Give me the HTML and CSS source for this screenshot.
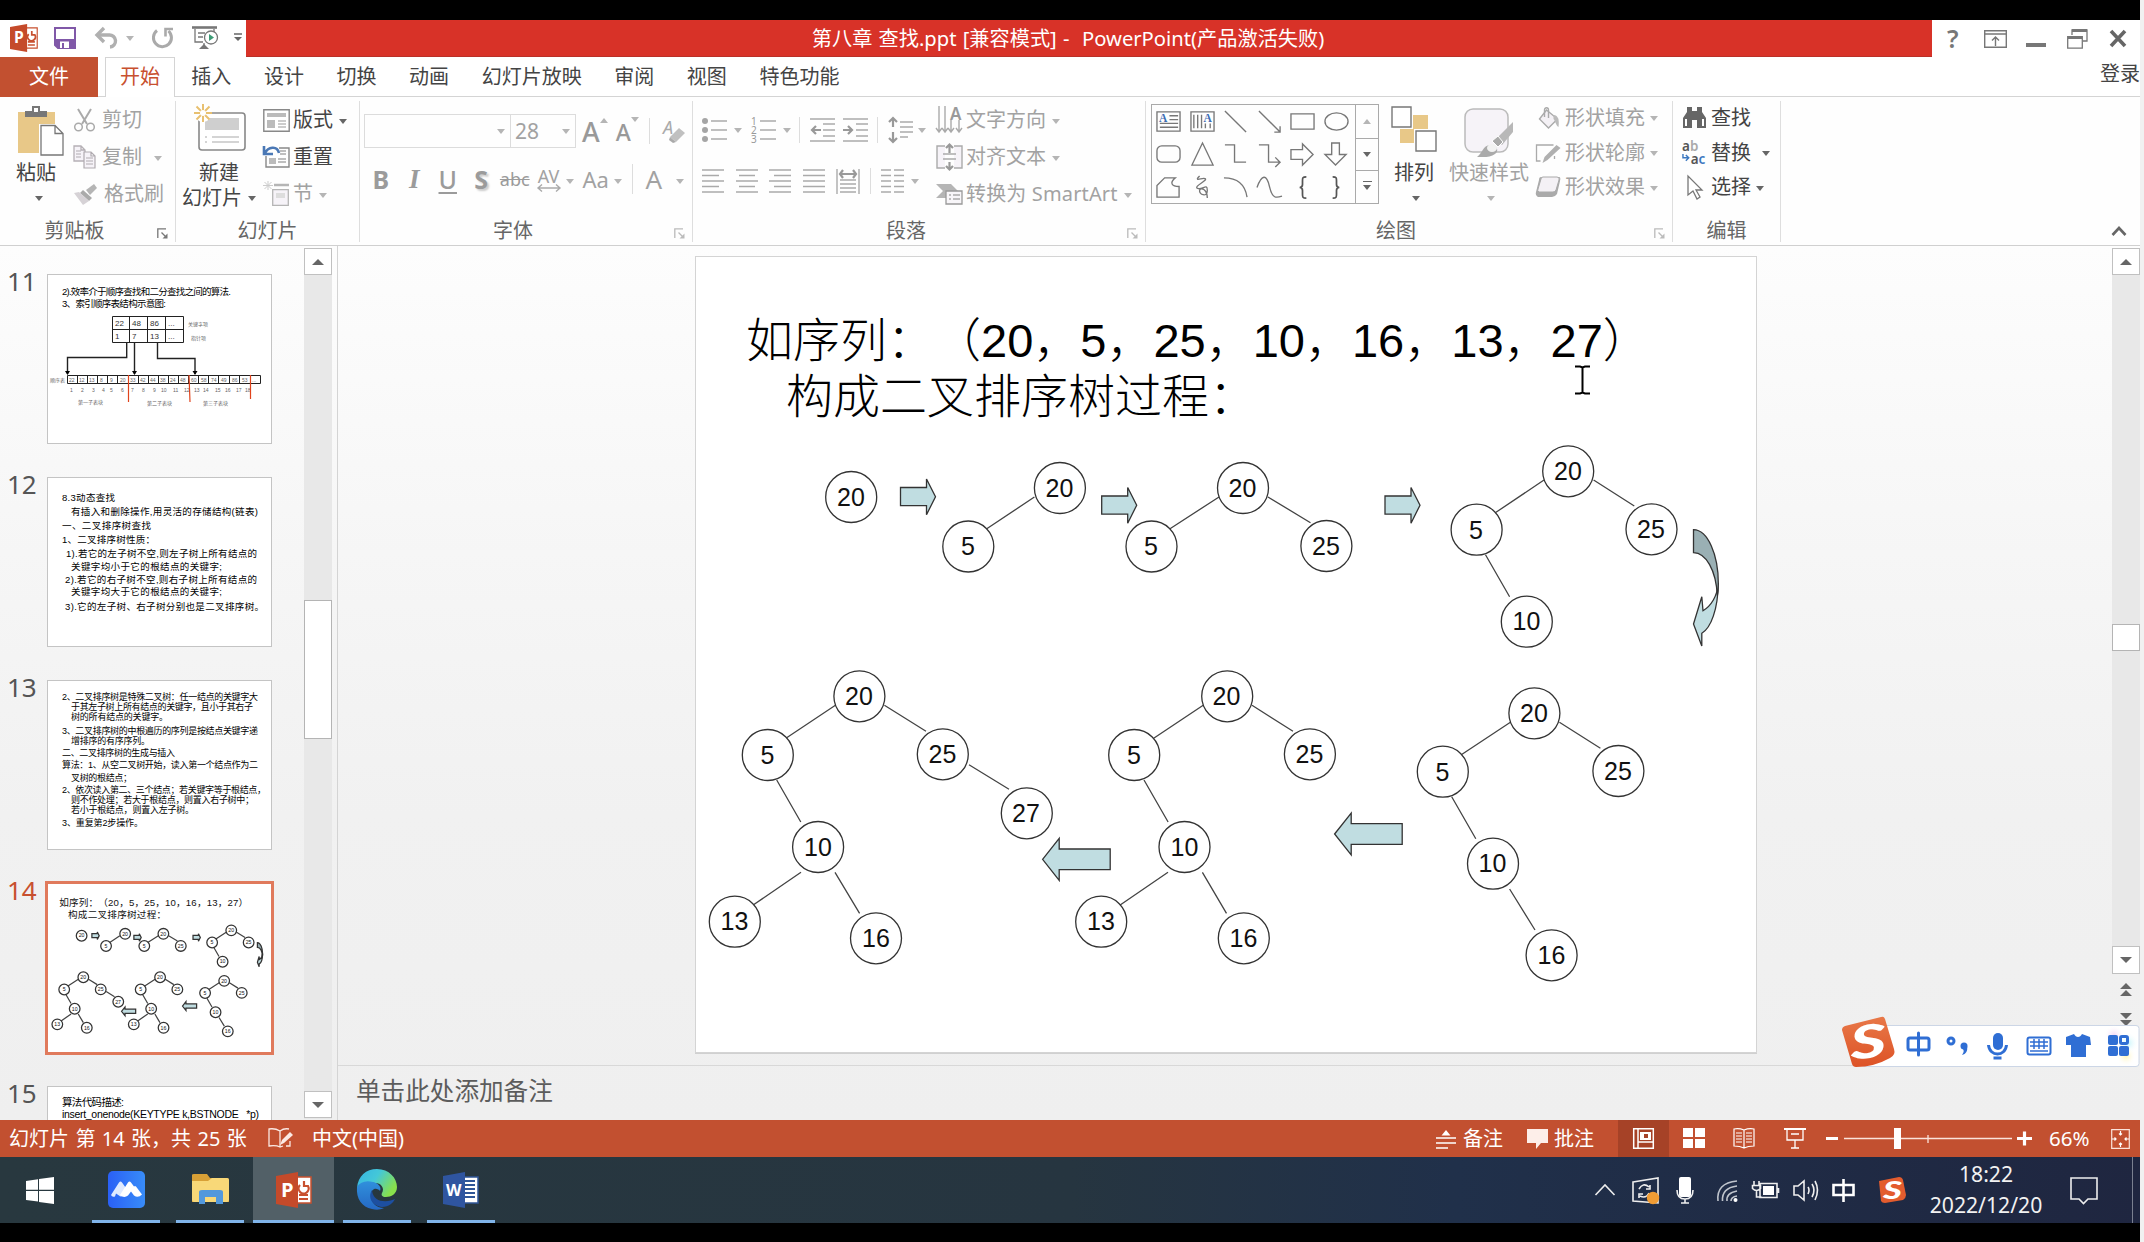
FILE: index.html
```html
<!DOCTYPE html>
<html lang="zh-CN">
<head>
<meta charset="utf-8">
<title>第八章 查找.ppt - PowerPoint</title>
<link rel="stylesheet" href="styles.css">
</head>
<body>
<svg class="defs" width="0" height="0">
  <symbol id="launcher" viewBox="0 0 12 12"><path d="M.8 10V.8H9" fill="none" stroke="currentColor" stroke-width="1.3"/><path d="M4.5 4.5l4 4" stroke="currentColor" stroke-width="1.3"/><path d="M10.500 5.500v5h-5z" fill="currentColor"/></symbol>
  <symbol id="ppt" viewBox="0 0 36 36"><path d="M20 5h15v26H20z" fill="#fff" stroke="#c8502f" stroke-width="1.500"/><path d="M24 13a5 5 0 1 0 8 1h-4v-5M23 23h9M23 27h9" fill="none" stroke="#c8502f" stroke-width="2.200"/><path d="M0 4 22 0v36L0 32z" fill="#c54a2a"/><text x="5" y="24.500" class="logo-letter">P</text></symbol>
  <symbol id="word" viewBox="0 0 36 36"><path d="M20 5h15v26H20z" fill="#fff" stroke="#2f5597" stroke-width="1.500"/><path d="M22 9h10M22 13h10M22 17h10M22 21h10M22 25h10" stroke="#2f5597" stroke-width="2"/><path d="M0 4 22 0v36L0 32z" fill="#2f55a0"/><text x="3" y="24" class="logo-letter word-letter">W</text></symbol>
</svg>
<div class="letterbox top"></div>

<header class="titlebar">
  <div class="quick">
    <svg width="28" height="28"><use href="#ppt"/></svg>
    <svg class="save" width="22" height="22" viewBox="0 0 22 22"><path d="M1 1h20v20H4l-3-3z" fill="#fff" stroke="#8058a8" stroke-width="2"/><path d="M1 12h20v9H4l-3-3z" fill="#8058a8"/><path d="M6 14.500h9V21H6z" fill="#fff"/><path d="M8 16h2v5H8z" fill="#8058a8"/></svg>
    <svg class="undo" width="24" height="22" viewBox="0 0 24 22"><path d="M2 8h12a6 6 0 0 1 1 12" fill="none" stroke="#b0b0b0" stroke-width="3.400"/><path d="M9 1 2 8l7 7" fill="none" stroke="#b0b0b0" stroke-width="3.400"/></svg>
    <i class="caret faint undo-caret"></i>
    <svg class="redo" width="24" height="22" viewBox="0 0 24 22"><path d="M6 3.500A9 9 0 1 0 17.500 4" fill="none" stroke="#aaa" stroke-width="3"/><path d="M14.500 9.500V2h7.500" fill="none" stroke="#aaa" stroke-width="2.600"/></svg>
    <svg class="show" width="26" height="24" viewBox="0 0 26 24"><path d="M0 1.500h25" stroke="#777" stroke-width="2.600"/><path d="M3 3v13h8M22 3v3M6 7h7M6 11h5M12 17v3" stroke="#777" stroke-width="1.300" fill="none"/><path d="M7 23l5-5 5 5z" fill="#777"/><circle cx="19" cy="11.500" r="6.500" fill="#fff" stroke="#777" stroke-width="1.300"/><path d="M17 8l5 3.500-5 3.500z" fill="#3d9b76"/></svg>
    <svg class="custom" width="8" height="10" viewBox="0 0 8 10"><path d="M0 1h8" stroke="#666" stroke-width="1.500"/><path d="M0 4h8L4 8z" fill="#666"/></svg>
  </div>
  <div class="caption">第八章 查找.ppt [兼容模式] -&nbsp; PowerPoint(产品激活失败)</div>
  <div class="window-tools">
    <span class="help">?</span>
    <svg class="opts" width="23" height="18" viewBox="0 0 23 18"><path d="M.7.700h21.600v16.600H.700zM.7 4h21.600M11.500 16V7M8 10.500 11.500 7l3.500 3.500" fill="none" stroke="#777" stroke-width="1.400"/></svg>
    <i class="minimise"></i>
    <svg class="restore" width="21" height="20" viewBox="0 0 21 20"><path d="M5 6V1h15v11h-4" fill="none" stroke="#777" stroke-width="1.300"/><path d="M5 1.500h15M1 8.500h14" stroke="#777" stroke-width="3"/><path d="M.7 7.700h14.600v11.500H.700z" fill="none" stroke="#777" stroke-width="1.300"/></svg>
    <svg class="close" width="18" height="17" viewBox="0 0 18 17"><path d="M2 1l14 15M16 1 2 16" stroke="#666" stroke-width="3.600"/></svg>
  </div>
</header>

<nav class="tabs">
  <span class="file">文件</span><span class="tab active">开始</span><span class="tab">插入</span><span class="tab">设计</span><span class="tab">切换</span><span class="tab">动画</span><span class="tab">幻灯片放映</span><span class="tab">审阅</span><span class="tab">视图</span><span class="tab">特色功能</span><span class="login">登录</span>
</nav>

<section class="ribbon">
  <div class="group g-clip">
    <div class="body">
      <div class="big paste">
        <svg width="47" height="50" viewBox="0 0 47 50"><path d="M1 6h37v41H1z" fill="#e8c888"/><path d="M8 11V5h7V0h8v5h7v6z" fill="#777"/><path d="M17 2h4v4h-4z" fill="#fff"/><path d="M22 18h16l9 9v23H22z" fill="#fff"/><path d="M24 19.500h14l8 8V49H24zM38 19.500v8h8" fill="#fff" stroke="#777" stroke-width="1.300"/></svg>
        <b>粘贴</b><i class="caret"></i>
      </div>
      <div class="rows off">
        <div><svg width="23" height="24" viewBox="0 0 23 24"><path d="M5 1l9 15M18 1 9 16" stroke="#aaa" stroke-width="2"/><circle cx="5.500" cy="19" r="3.800" fill="none" stroke="#aaa" stroke-width="1.500"/><circle cx="17.500" cy="19" r="3.800" fill="none" stroke="#aaa" stroke-width="1.500"/></svg><span>剪切</span></div>
        <div><svg width="23" height="24" viewBox="0 0 23 24"><path d="M1 1h7l4 4v11H1zM8 1v4h4" fill="#f6f3f8" stroke="#b5b0b5" stroke-width="1.300"/><path d="M11 7h7l4 4v12H11zM18 7v4h4M13 13h7M13 16h7M13 19h7M3 6h5M3 9h5M3 12h5" fill="#f6f3f8" stroke="#b0abb0" stroke-width="1.200"/></svg><span>复制</span><i class="caret"></i></div>
        <div><svg width="25" height="22" viewBox="0 0 25 22"><path d="M13 7l8-6 3 4-7 7z" fill="#b5b5b5"/><path d="M10 7l9 8-3 3-9-8z" fill="#aaa"/><path d="M6 9l10 9-6 4-9-12z" fill="#d6d2d6"/></svg><span>格式刷</span></div>
      </div>
    </div>
    <div class="foot"><span>剪贴板</span><svg width="12" height="12"><use href="#launcher"/></svg></div>
  </div>

  <div class="group g-slides">
    <div class="body">
      <div class="big newslide">
        <svg width="52" height="48" viewBox="0 0 52 48"><rect x="5" y="9" width="46" height="37" rx="3" fill="#fff" stroke="#888" stroke-width="1.600"/><path d="M11 14h34v12H11z" fill="#cfcfcf"/><path d="M18 33h27M18 38h27M11 33h2M11 38h2" stroke="#aaa" stroke-width="1.200"/><circle cx="9" cy="9" r="9" fill="#fff"/><path d="M9 0v18M0 9h18M2.500 2.500l13 13M15.500 2.500l-13 13" stroke="#e8c070" stroke-width="2"/><circle cx="9" cy="9" r="3" fill="#fff"/></svg>
        <b>新建</b><b class="second">幻灯片<i class="caret"></i></b>
      </div>
      <div class="rows">
        <div><svg width="27" height="23" viewBox="0 0 27 23"><path d="M.8.800h25.400v21.400H.800z" fill="#fff" stroke="#888" stroke-width="1.400"/><path d="M4 4h19v4H4zM4 11h8v8H4z" fill="#bbb"/><path d="M15 12h8M15 15h8M15 18h8" stroke="#999" stroke-width="1.200"/></svg><span>版式</span><i class="caret"></i></div>
        <div><svg width="27" height="24" viewBox="0 0 27 24"><path d="M16 3h10v19H3V11" fill="none" stroke="#888" stroke-width="1.400"/><path d="M17 6h6M17 9h6M15 14h8M15 17h8" stroke="#aaa" stroke-width="1.300"/><path d="M6 13h7v6H6z" fill="#bbb"/><path d="M1 1v8h9M2 8C5 2 14 0 16 8" fill="none" stroke="#4a78b5" stroke-width="2.600"/></svg><span>重置</span></div>
        <div class="off"><svg width="27" height="26" viewBox="0 0 27 26"><path d="M5 0v9M0 4.500h10M1.500 1l7 7M8.500 1l-7 7" stroke="#ccc"/><path d="M11 4h15" stroke="#b5b5b5" stroke-width="2.500"/><path d="M9.700 8.700h15.600v15.600H9.700z" fill="#f6f3f8" stroke="#b5b5b5" stroke-width="1.300"/><path d="M13 12h9v5h-9z" fill="#ddd"/></svg><span>节</span><i class="caret"></i></div>
      </div>
    </div>
    <div class="foot"><span>幻灯片</span></div>
  </div>

  <div class="group g-font off">
    <div class="body">
      <div class="line font-top">
        <div class="combo"><span></span><i class="caret faint"></i></div><div class="combo size"><span>28</span><i class="caret faint"></i></div>
        <span class="grow">A<i class="caret up"></i></span><span class="shrink">A<i class="caret"></i></span><i class="vsep"></i>
        <svg width="23" height="25" viewBox="0 0 23 25"><text x="0" y="15" class="erase-a">A</text><path d="M16 9l6 5-9 9-6-5z" fill="#c0c0c0"/><path d="M7 18l6 5-3 1-4-3z" fill="#aaa"/></svg>
      </div>
      <div class="line font-bottom">
        <b class="fb">B</b><b class="fb it">I</b><b class="fb un">U</b><b class="fb sh">S</b><span class="fb strike">abc</span><span class="av">AV<svg width="24" height="8" viewBox="0 0 24 8"><path d="M1 4h22M5 .500 1 4l4 3.500M19 .500l4 3.500-4 3.500" fill="none" stroke="#aaa" stroke-width="1.400"/></svg></span><i class="caret faint"></i><span class="aa">Aa</span><i class="caret faint"></i><i class="vsep"></i><span class="fcolor">A</span><i class="caret faint"></i>
      </div>
    </div>
    <div class="foot"><span>字体</span><svg width="12" height="12"><use href="#launcher"/></svg></div>
  </div>

  <div class="group g-para off">
    <div class="body">
      <div class="para-left">
        <div class="line">
          <svg class="ln" width="25" height="26" viewBox="0 0 25 26"><path d="M9 4h16M9 13h16M9 22h16"/><g class="dot"><circle cx="3" cy="4" r="3"/><circle cx="3" cy="13" r="3"/><circle cx="3" cy="22" r="3"/></g></svg><i class="caret faint c1"></i>
          <svg class="ln nums" width="25" height="26" viewBox="0 0 25 26"><path d="M9 4h16M9 13h16M9 22h16"/><g class="n"><text x="0" y="8">1</text><text x="0" y="17">2</text><text x="0" y="26">3</text></g></svg><i class="caret faint c2"></i><i class="vsep"></i>
          <svg class="ln o1" width="25" height="24" viewBox="0 0 25 24"><path d="M0 1h25M13 6h12M13 12h12M13 18h12M0 23h25"/><path class="arr" d="M11 12H2M6 8l-4 4 4 4"/></svg>
          <svg class="ln o2" width="25" height="24" viewBox="0 0 25 24"><path d="M0 1h25M13 6h12M13 12h12M13 18h12M0 23h25"/><path class="arr" d="M0 12h9M5 8l4 4-4 4"/></svg><i class="vsep s2"></i>
          <svg class="ln o3" width="25" height="26" viewBox="0 0 25 26"><path d="M12 5h13M12 10h13M12 15h13M12 20h8"/><path class="arr" d="M5 1v9M1 5l4-4 4 4M5 15v9M1 21l4 4 4-4"/></svg><i class="caret faint c3"></i>
        </div>
        <div class="line second">
          <svg class="ln" width="23" height="24" viewBox="0 0 23 24"><path d="M0 1h22M0 6.500h17M0 12h22M0 17.500h17M0 23h22"/></svg>
          <svg class="ln" width="23" height="24" viewBox="0 0 23 24"><path d="M0 1h22M3 6.500h16M0 12h22M3 17.500h16M0 23h22"/></svg>
          <svg class="ln" width="23" height="24" viewBox="0 0 23 24"><path d="M0 1h22M5 6.500h17M0 12h22M5 17.500h17M0 23h22"/></svg>
          <svg class="ln" width="23" height="24" viewBox="0 0 23 24"><path d="M0 1h22M0 6.500h22M0 12h22M0 17.500h22M0 23h22"/></svg>
          <svg class="ln" width="24" height="25" viewBox="0 0 24 25"><path d="M1 0v25M23 0v25M4 11h16M4 15h16M4 19h16M4 23h16"/><path class="arr" d="M4 5h16M7 1 4 5l3 4M17 1l3 4-3 4"/></svg><i class="vsep"></i>
          <svg class="ln" width="23" height="24" viewBox="0 0 23 24"><path d="M0 1h10M0 6.500h10M0 12h10M0 17.500h10M0 23h10M13 1h10M13 6.500h10M13 12h10M13 17.500h10M13 23h10"/></svg><i class="caret faint"></i>
        </div>
      </div>
      <div class="rows">
        <div><svg class="ln" width="27" height="28" viewBox="0 0 27 28"><path d="M3 0v26M9 0v26M15 14v12M23 14v12M0 22l3 4 3-4M6 22l3 4 3-4M12 22l3 4 3-4M20 22l3 4 3-4"/><text x="14" y="14" class="dir-a">A</text></svg><span>文字方向</span><i class="caret"></i></div>
        <div><svg class="ln" width="27" height="26" viewBox="0 0 27 26"><path d="M9 2H1v22h8M18 2h8v22h-8M7 10h13M7 15h13" fill="#f6f3f8"/><path class="arr" d="M13.500 9V1M10 4l3.500-3.500L17 4M13.500 18v7M10 22l3.500 3.500L17 22"/></svg><span>对齐文本</span><i class="caret"></i></div>
        <div><svg width="27" height="22" viewBox="0 0 27 22"><path d="M0 1h15l7 7-7 7H0l7-7z" fill="#b5b5b5"/><path d="M10 8h16v13H10z" fill="#f8f6f9" stroke="#999" stroke-width="1.300"/><path d="M13 12h2M17 12h7M13 16h2M17 16h7" stroke="#aaa" stroke-width="1.300"/></svg><span class="smart">转换为 SmartArt</span><i class="caret"></i></div>
      </div>
    </div>
    <div class="foot"><span>段落</span><svg width="12" height="12"><use href="#launcher"/></svg></div>
  </div>

  <div class="group g-draw">
    <div class="body">
      <div class="gallery">
        <div class="shapes">
          <svg viewBox="0 0 26 26"><path d="M1 3h24v20H1zM14 7h9M14 11h9M4 15h19M4 19h19"/><text x="3" y="13">A</text></svg>
          <svg viewBox="0 0 26 26"><path d="M1 3h24v20H1zM4 6v14M8 6v14M12 6v14M16 15v5M21 15v5"/><text x="14" y="13">A</text></svg>
          <svg viewBox="0 0 26 26"><path d="M2 2l22 22"/></svg>
          <svg viewBox="0 0 26 26"><path d="M2 2l22 22M24 18v6h-6"/></svg>
          <svg viewBox="0 0 26 26"><path d="M1 5h24v16H1z"/></svg>
          <svg viewBox="0 0 26 26"><ellipse cx="13" cy="13" rx="12" ry="9"/></svg>
          <svg viewBox="0 0 26 26"><rect x="1" y="4" width="24" height="17" rx="5"/></svg>
          <svg viewBox="0 0 26 26"><path d="M13 1l11 23H2z"/></svg>
          <svg viewBox="0 0 26 26"><path d="M2 3h10v18h12"/></svg>
          <svg viewBox="0 0 26 26"><path d="M2 3h10v18h12M19 16l5 5-5 5"/></svg>
          <svg viewBox="0 0 26 26"><path d="M1 8h12V2l11 11-11 11v-6H1z"/></svg>
          <svg viewBox="0 0 26 26"><path d="M8 1h8v12h7L12 24 1 13h7z"/></svg>
          <svg viewBox="0 0 26 26"><path d="M1 23V11l8-8h11c-6 5-4 9 4 9v11z"/></svg>
          <svg viewBox="0 0 26 26"><path d="M10 1C3 8 14 2 16 4S3 12 8 14s10-6 10 2-9 4-8 0 8-1 8 8"/></svg>
          <svg viewBox="0 0 26 26"><path d="M1 3c14 0 22 7 24 20"/></svg>
          <svg viewBox="0 0 26 26"><path d="M0 13C5-1 10-1 13 12s7 12 13 10"/></svg>
          <svg viewBox="0 0 26 26" class="brace"><path d="M17 2c-4 0-4 1-4 4v4c0 2-1 3-3 3 2 0 3 1 3 3v4c0 3 0 4 4 4"/></svg>
          <svg viewBox="0 0 26 26" class="brace"><path d="M9 2c4 0 4 1 4 4v4c0 2 1 3 3 3-2 0-3 1-3 3v4c0 3 0 4-4 4"/></svg>
        </div>
        <div class="gscroll"><span><i class="caret up faint"></i></span><span><i class="caret"></i></span><span class="more"><i class="caret"></i></span></div>
      </div>
      <div class="big arrange">
        <svg width="46" height="47" viewBox="0 0 46 47"><path d="M22 9h15v15H22zM9 23h14v14H9z" fill="#e8c888"/><path d="M1 1h19v20H1z" fill="#fff" stroke="#777" stroke-width="1.400"/><path d="M23 23h23v23H23z" fill="#fff"/><path d="M25 25h20v20H25z" fill="#fff" stroke="#777" stroke-width="1.400"/></svg>
        <b>排列</b><i class="caret"></i>
      </div>
      <div class="big quickstyle off">
        <svg width="50" height="50" viewBox="0 0 50 50"><rect x="1" y="1" width="43" height="43" rx="8" fill="#f6f3f8" stroke="#bbb" stroke-width="1.500"/><path d="M49 14v10l-11 13-6-6z" fill="#b8b8b8"/><path d="M34 28l5 6-5 5-6-6z" fill="#aaa" stroke="#fff"/><path d="M13 49c5-3 6-12 13-12 6-1 10 5 5 9s-12 3-18 3z" fill="#aaa"/><ellipse cx="28" cy="40" rx="5" ry="4" fill="#f2f2f2"/></svg>
        <b>快速样式</b><i class="caret"></i>
      </div>
      <div class="rows tight off">
        <div><svg width="26" height="22" viewBox="0 0 26 22"><path d="M11 3l11 9-9 9-9-9z" fill="#f4f1f5" stroke="#aaa" stroke-width="1.400"/><path d="M9 10V3c0-3 4-3 4 0v8" fill="none" stroke="#aaa" stroke-width="1.400"/><path d="M18 8c5 0 6 6 5 12-3-2-3-6-5-8z" fill="#bbb"/></svg><span>形状填充</span><i class="caret"></i></div>
        <div><svg width="26" height="22" viewBox="0 0 26 22"><path d="M18 3H1v16h4M19 14v3" fill="none" stroke="#aaa" stroke-width="1.300"/><path d="M7 21l2-6L21 3l4 3-13 12z" fill="#b0b0b0"/></svg><span>形状轮廓</span><i class="caret"></i></div>
        <div><svg width="27" height="23" viewBox="0 0 27 23"><path d="M6 1h18q2 0 1 4l-3 13q-2 3-5 3H3q-3-2-2-5L4 4q0-3 2-3z" fill="#aaa"/><path d="M8 1h14q3 0 2 3l-3 10q-1 2-3 2H4q-2-1-1-3L6 3q0-2 2-2z" fill="#f4f1f5" stroke="#aaa"/></svg><span>形状效果</span><i class="caret"></i></div>
      </div>
    </div>
    <div class="foot off2"><span>绘图</span><svg width="12" height="12"><use href="#launcher"/></svg></div>
  </div>

  <div class="group g-edit">
    <div class="body">
      <div class="rows tight">
        <div><svg width="25" height="22" viewBox="0 0 25 22"><path d="M5 0h5v4h5V0h5v5l4 6v10h-9v-8h-5v8H1V11l4-6z" fill="#666"/><path d="M3 12h2v7H3z" fill="#fff"/><path d="M20 12h2v7h-2z" fill="#fff"/></svg><span>查找</span></div>
        <div><svg width="26" height="25" viewBox="0 0 26 25"><g class="rep"><text x="0" y="11">a<tspan fill="#aaa">b</tspan></text><text x="9" y="24">a<tspan fill="#3c78c0">c</tspan></text></g><path d="M1 14v4h6M4 15l3 3-3 3" fill="none" stroke="#3c78c0" stroke-width="1.500"/></svg><span>替换</span><i class="caret replace-caret"></i></div>
        <div><svg width="25" height="25" viewBox="0 0 25 25"><path d="M6 1v19l5-4 4 8 3-2-4-7h6z" fill="#fff" stroke="#777" stroke-width="1.300"/></svg><span>选择</span><i class="caret"></i></div>
      </div>
    </div>
    <div class="foot"><span>编辑</span></div>
  </div>
  <svg class="collapse" width="16" height="10" viewBox="0 0 16 10"><path d="M1.500 9 8 2l6.500 7" fill="none" stroke="#666" stroke-width="2.600"/></svg>
</section>

<main class="work">
  <aside class="thumbs">
    <div class="thumb-row"><span>11</span>
      <svg class="thumb" width="225" height="170" viewBox="47 274 225 170">
        <g class="tt"><text x="62" y="294.500" textLength="169">2).效率介于顺序查找和二分查找之间的算法.</text><text x="62" y="306.500" textLength="104">3、索引顺序表结构示意图:</text></g>
        <g fill="none" stroke="#222" stroke-width="1"><path d="M112.500 316.500h71v26h-71zM112.500 329.500h71M129.500 316v26M147.500 316v26M165.500 316v26"/><path d="M126.700 343v14.500H67.500V374M134.500 343v31M157.500 343v15.500h37.500V374" stroke-width="1.400"/><path d="M67.500 375.500h193v8h-193zM77.500 375v8M87.500 375v8M97.500 375v8M107.500 375v8M117.500 375v8M128.500 375v8M138.500 375v8M148.500 375v8M158.500 375v8M168.500 375v8M178.500 375v8M188.500 375v8M198.500 375v8M208.500 375v8M218.500 375v8M229.500 375v8M239.500 375v8M250.500 375v8"/></g>
        <path d="M65 371h5l-2.500 4zM132 371h5l-2.500 4zM192.500 371h5l-2.500 4z"/>
        <g class="cell"><text x="115" y="326">22</text><text x="132" y="326">48</text><text x="150" y="326">86</text><text x="168" y="326">...</text><text x="115" y="339">1</text><text x="132" y="339">7</text><text x="150" y="339">13</text><text x="168" y="339">...</text></g>
        <g class="tiny"><text x="188" y="326">关键字项</text><text x="191" y="340">指针项</text><text x="50" y="382">顺序表</text><text x="78" y="404">第一子表块</text><text x="147" y="405">第二子表块</text><text x="203" y="405">第三子表块</text>
        <text x="69" y="381.500">22</text><text x="79" y="381.500">12</text><text x="89" y="381.500">13</text><text x="100" y="381.500">8</text><text x="110" y="381.500">9</text><text x="120" y="381.500">20</text><text x="130" y="381.500">33</text><text x="140" y="381.500">42</text><text x="150" y="381.500">44</text><text x="160" y="381.500">38</text><text x="170" y="381.500">24</text><text x="180" y="381.500">48</text><text x="191" y="381.500">60</text><text x="201" y="381.500">58</text><text x="211" y="381.500">74</text><text x="221" y="381.500">49</text><text x="232" y="381.500">86</text><text x="242" y="381.500">53</text><text x="252" y="381.500">...</text>
        <text x="70" y="392">1</text><text x="81" y="392">2</text><text x="92" y="392">3</text><text x="102" y="392">4</text><text x="110" y="392">5</text><text x="121" y="392">6</text><text x="131" y="392">7</text><text x="142" y="392">8</text><text x="153" y="392">9</text><text x="161" y="392">10</text><text x="173" y="392">11</text><text x="184" y="392">12</text><text x="194" y="392">13</text><text x="203" y="392">14</text><text x="215" y="392">15</text><text x="225" y="392">16</text><text x="236" y="392">17</text><text x="245" y="392">18</text></g>
        <path d="M128.500 375v27M189 375l1 27M250.500 375v24" stroke="#e0431c" stroke-width="1.200"/>
      </svg></div>
    <div class="thumb-row"><span>12</span>
      <svg class="thumb" width="225" height="170" viewBox="47 477 225 170"><g class="tt">
        <text x="62" y="500.500" textLength="53">8.3动态查找</text><text x="71" y="515" textLength="187">有插入和删除操作,用灵活的存储结构(链表)</text><text x="62" y="528.500" textLength="89">一、二叉排序树查找</text><text x="62" y="542.500" textLength="93">1、二叉排序树性质：</text><text x="66" y="557" textLength="191">1).若它的左子树不空,则左子树上所有结点的</text><text x="71" y="570" textLength="151">关键字均小于它的根结点的关键字;</text><text x="65" y="582.500" textLength="192">2).若它的右子树不空,则右子树上所有结点的</text><text x="71" y="595" textLength="151">关键字均大于它的根结点的关键字;</text><text x="65" y="609.500" textLength="199">3).它的左子树、右子树分别也是二叉排序树。</text></g></svg></div>
    <div class="thumb-row"><span>13</span>
      <svg class="thumb" width="225" height="170" viewBox="47 680 225 170"><g class="tt dense">
        <text x="62" y="700" textLength="196">2、二叉排序树是特殊二叉树：任一结点的关键字大</text><text x="71" y="710" textLength="182">于其左子树上所有结点的关键字，且小于其右子</text><text x="71" y="720" textLength="97">树的所有结点的关键字。</text><text x="62" y="733.500" textLength="196">3、二叉排序树的中根遍历的序列是按结点关键字递</text><text x="71" y="743.500" textLength="79">增排序的有序序列。</text><text x="62" y="756" textLength="113">二、二叉排序树的生成与插入</text><text x="62" y="768" textLength="196">算法：1、从空二叉树开始，读入第一个结点作为二</text><text x="71" y="780.500" textLength="61">叉树的根结点；</text><text x="62" y="792.500" textLength="204">2、依次读入第二、三个结点；若关键字等于根结点，</text><text x="71" y="802.500" textLength="183">则不作处理；若大于根结点，则置入右子树中；</text><text x="71" y="812.500" textLength="123">若小于根结点，则置入左子树。</text><text x="62" y="826" textLength="81">3、重复第2步操作。</text></g></svg></div>
    <div class="thumb-row current"><span>14</span>
      <svg class="thumb" width="225" height="170" viewBox="685.400 244.500 1078 814.500"><g class="mini-title"><text x="744" y="355" textLength="905">如序列：（20，5，25，10，16，13，27）</text><text x="786" y="411" textLength="470">构成二叉排序树过程：</text></g><use href="#trees"/></svg></div>
    <div class="thumb-row"><span>15</span>
      <svg class="thumb" width="225" height="170" viewBox="47 1086 225 170"><g class="tt last"><text x="62" y="1106" textLength="62">算法代码描述:</text><text x="62" y="1117.500" textLength="197" xml:space="preserve">insert_onenode(KEYTYPE k,BSTNODE   *p)</text></g></svg></div>
  </aside>
  <div class="scrollbar left"><span class="btn"><i class="caret up"></i></span><span class="handle h1"></span><span class="btn end"><i class="caret"></i></span></div>
  <div class="editor">
    <div class="stage">
      <svg class="slide" width="1062" height="797" viewBox="695 256 1062 797">
        <g class="title"><text x="746" y="357">如序列：（20，5，25，10，16，13，27）</text><text x="786" y="413">构成二叉排序树过程：</text></g>
        <g id="trees" class="trees">
          <g class="arrow"><path id="ar" d="M900.500 487.500h26V479l9 17.700-9 18v-9h-26z"/><use href="#ar" x="201.200" y="8.500"/><use href="#ar" x="484.500" y="8.500"/>
            <path id="al" d="M1042.600 859.300l16.600-21v10.700h51v20.700h-51v10.600z"/><use href="#al" x="292" y="-25.300"/>
            <path d="M1718.300 583C1718 609 1711 628 1701.800 633.300V646L1693.500 624l8.300-27.300 1.200 14C1711 606 1717.500 596 1718.300 583z"/>
            <path class="dark" d="M1693.500 529.700C1708 530 1718.300 555 1718.300 583c0 6-.3 9-1 12.500C1716 570 1706 553 1693.500 552.700z"/></g>
          <path class="edges" d="M1034.400 497 986 529.300M1219 497l-49 31.700M1268 497l42.500 25.700M1544 480l-49.500 33.300M1593.600 480l40.700 26M1485.500 554.700l24.100 42M1510.400 722.300l-49.500 32.700M1559.400 722.300l41 26M1451.700 796.700l24.100 42M1509.600 889l25.400 41M1203.200 705.300l-49.500 33M1252 705.300l41 26M1144 780l24.100 42M1168 872.300l-48.200 33M1202.400 872.300l24.100 41M835.400 705.300l-49.500 33M884.400 705.300l41.600 26M776.700 780l24.100 42M801 872.300l-48.200 33M835 872.300l24.600 41M969 764.700l40 24.600"/>
          <g class="nodes"><circle cx="851.200" cy="497" r="25.500"/><circle cx="1059.900" cy="488" r="25.500"/><circle cx="968.300" cy="546.500" r="25.500"/><circle cx="1243" cy="488" r="25.500"/><circle cx="1151.500" cy="546.500" r="25.500"/><circle cx="1326.400" cy="546" r="25.500"/><circle cx="1568.200" cy="471.300" r="25.500"/><circle cx="1476.600" cy="529.700" r="25.500"/><circle cx="1651.500" cy="529.300" r="25.500"/><circle cx="1526.800" cy="621.700" r="25.500"/><circle cx="1534.400" cy="713.300" r="25.500"/><circle cx="1442.800" cy="771.700" r="25.500"/><circle cx="1618.400" cy="771" r="25.500"/><circle cx="1493" cy="863.700" r="25.500"/><circle cx="1551.600" cy="955.300" r="25.500"/><circle cx="1227.200" cy="696.300" r="25.500"/><circle cx="1134.200" cy="755" r="25.500"/><circle cx="1309.900" cy="754.300" r="25.500"/><circle cx="1184.500" cy="847" r="25.500"/><circle cx="1101.200" cy="921.700" r="25.500"/><circle cx="1243.800" cy="938.300" r="25.500"/><circle cx="859.400" cy="696.300" r="25.500"/><circle cx="767.800" cy="755" r="25.500"/><circle cx="942.800" cy="754.300" r="25.500"/><circle cx="1026.800" cy="813.300" r="25.500"/><circle cx="818.100" cy="847" r="25.500"/><circle cx="734.800" cy="921.700" r="25.500"/><circle cx="876" cy="938.300" r="25.500"/></g>
          <g class="labels"><text x="851" y="505.500">20</text><text x="1059.500" y="496.500">20</text><text x="968" y="555">5</text><text x="1242.500" y="496.500">20</text><text x="1151" y="555">5</text><text x="1326" y="554.500">25</text><text x="1568" y="480">20</text><text x="1476" y="538.500">5</text><text x="1651" y="537.500">25</text><text x="1526.500" y="630">10</text><text x="1534" y="721.500">20</text><text x="1442.500" y="780.500">5</text><text x="1618" y="779.500">25</text><text x="1492.500" y="872">10</text><text x="1551.500" y="963.500">16</text><text x="1226.500" y="704.500">20</text><text x="1134" y="763.500">5</text><text x="1309.500" y="762.500">25</text><text x="1184.500" y="855.500">10</text><text x="1101" y="930">13</text><text x="1243.500" y="946.500">16</text><text x="859" y="704.500">20</text><text x="767.500" y="763.500">5</text><text x="942.500" y="762.500">25</text><text x="1026" y="822">27</text><text x="818" y="855.500">10</text><text x="734.500" y="930">13</text><text x="876" y="946.500">16</text></g>
        </g>
        <path d="M1575 366.500h5l2.500 1 2.500-1h5M1582.500 367v26M1575 393.500h5l2.500-1 2.500 1h5" fill="none" stroke="#000" stroke-width="2"/>
      </svg>
    </div>
    <div class="notes">单击此处添加备注</div>
  </div>
  <div class="scrollbar right"><span class="btn"><i class="caret up"></i></span><span class="handle h2"></span><span class="btn end"><i class="caret"></i></span>
    <svg class="pager" width="12" height="44" viewBox="0 0 12 44"><path d="M0 7l6-6 6 6zM0 14l6-6 6 6zM0 31h12l-6 6zM0 38h12l-6 6z" fill="#666"/></svg></div>

  <div class="ime">
    <svg width="298" height="54" viewBox="0 0 298 54">
      <defs><linearGradient id="og" x2="0" y2="1"><stop offset="0" stop-color="#e87848"/><stop offset="1" stop-color="#dd5226"/></linearGradient><radialGradient id="pk"><stop offset="0" stop-color="#f4d8f6"/><stop offset="1" stop-color="#fff" stop-opacity="0"/></radialGradient><radialGradient id="cy"><stop offset="0" stop-color="#c8f5fa"/><stop offset="1" stop-color="#fff" stop-opacity="0"/></radialGradient><radialGradient id="ye"><stop offset="0" stop-color="#fff5b8"/><stop offset="1" stop-color="#fff" stop-opacity="0"/></radialGradient></defs>
      <rect x="20" y="8.500" width="277" height="41" rx="3" fill="#fff" stroke="#ccd6e6"/>
      <circle cx="272" cy="18" r="10" fill="url(#pk)"/><circle cx="286" cy="26" r="11" fill="url(#cy)"/><circle cx="284" cy="39" r="10" fill="url(#ye)"/>
      <path d="M3 9 39 0q3-1 4 2l9 30q2 6-4 9-16 9-34 9-3 0-4-3L0 13q0-3 3-4z" fill="url(#og)"/>
      <text x="8" y="41" class="sogou" textLength="36" lengthAdjust="spacingAndGlyphs" transform="rotate(-5 26 26)">S</text>
      <g class="blue-line"><rect x="66" y="21" width="21" height="12" rx="2"/><path d="M76.500 18v22" stroke-linecap="round" transform="translate(0 -2)"/><circle cx="111" cy="25" r="3" transform="translate(-2 -1)"/><path d="M146 29c1 12 17 12 18 0M155 39v0M151 42h8" transform="translate(.5 -1)"/><rect x="185.500" y="20.500" width="23" height="17" rx="2" stroke-width="2"/><path d="M188 25h18M188 29h18M188 34h18M192 22v10M197 22v10M202 22v10" stroke-width="1.500"/></g>
      <g class="blue-fill"><circle cx="122" cy="29" r="3.500"/><path d="M125 29c1 5-1 8-5 9 2-3 2-4 1-6z"/><rect x="151" y="16" width="10" height="17" rx="5"/><path d="M224 20l8-3c2 4 6 4 8 0l8 3 1 8h-5v12h-15V28h-5z"/><rect x="266" y="18" width="10" height="10" rx="2"/><rect x="266" y="29" width="10" height="10" rx="2"/><rect x="277" y="29" width="10" height="10" rx="2"/></g><rect x="278.500" y="19.500" width="7" height="7" rx="1.500" class="blue-line"/>
    </svg>
  </div>
</main>

<footer class="status">
  <span class="s-page">幻灯片 第 14 张，共 25 张</span>
  <svg class="s-book" width="26" height="21" viewBox="0 0 26 21"><path d="M12 19V3Q7 0 1 1v17q7-1 11 1l3-1M12 3q4-3 9-2M22 13v5h-4" fill="none" stroke="#fbe9e4" stroke-width="1.300"/><path d="M12 17l2-5 8-8 3 3-9 8z" fill="#fbe9e4"/></svg>
  <span class="s-lang">中文(中国)</span>
  <svg class="s-n" width="20" height="20" viewBox="0 0 20 20"><path d="M5.500 6.500 10 1l4.500 5.500z" fill="#fff"/><path d="M0 9h20M0 14h20M0 19h12" stroke="#fff" stroke-width="1.400"/></svg><span class="s-t1">备注</span>
  <svg class="s-c" width="22" height="22" viewBox="0 0 22 22"><path d="M0 1h21v14h-7l-5 6v-6H0z" fill="#fdeee9"/></svg><span class="s-t2">批注</span>
  <span class="view on"><svg width="21" height="21" viewBox="0 0 21 21"><path d="M.7.700h19.600v19.600H.700zM5 1v19M5 14h15" fill="none" stroke="#fff" stroke-width="1.500"/><path d="M7 4h11v8H7z" fill="#fff"/><path d="M11 6h4v4h-4z" fill="#a5442a"/></svg></span>
  <span class="view"><svg width="22" height="21" viewBox="0 0 22 21"><path d="M0 0h10v9H0zM12 0h10v9H12zM0 11h10v9H0zM12 11h10v9H12z" fill="#fff"/></svg></span>
  <span class="view"><svg width="22" height="21" viewBox="0 0 22 21"><path d="M11 2v18M11 2Q6 0 1 1v17q6 0 10 2 4-2 10-2V1Q16 0 11 2M3 5h6M3 8h6M3 11h6M3 14h6M13 5h6M13 8h6M13 11h6M13 14h6" fill="none" stroke="#fff" stroke-width="1.200"/></svg></span>
  <span class="view"><svg width="22" height="21" viewBox="0 0 22 21"><path d="M0 1h22" stroke="#fff" stroke-width="2"/><path d="M3 1v11h16V1M7 6h8M11 12v8M7 20h8" fill="none" stroke="#fff" stroke-width="1.300"/></svg></span>
  <svg class="zoomer" width="206" height="21" viewBox="0 0 206 21"><path d="M0 10.500h12M191 10.500h15M198.500 3.500v14" stroke="#fff" stroke-width="3.200"/><path d="M18 10.500h168M102 7v8" stroke="#fbe3db" stroke-width="1.300"/><path d="M68 0h7v21h-7z" fill="#fff"/></svg>
  <span class="pct">66%</span>
  <svg class="fit" width="19" height="20" viewBox="0 0 19 20"><path d="M.7.700h17.600v18.600H.700z" fill="none" stroke="#fbe3db" stroke-width="1.200"/><path d="M9.500 2v4M9.500 18v-4M8 4.500 9.500 6 11 4.500M8 15.500 9.500 14l1.500 1.500M1 10h4M3.500 8.500 5 10l-1.500 1.500M18 10h-4M15.500 8.500 14 10l1.500 1.500" fill="none" stroke="#fff" stroke-width="1.200"/></svg>
</footer>

<footer class="taskbar">
  <span class="app start"><svg width="28" height="27" viewBox="0 0 28 27"><path d="M0 4 12 2.200v10.500H0zM13 2l15-2v12.700H13zM0 14h12v10.500L0 23zM13 14h15v13l-15-2z" fill="#fff"/></svg></span>
  <span class="app run meeting"><svg width="37" height="37" viewBox="0 0 37 37"><defs><linearGradient id="mg" x2="1"><stop offset="0" stop-color="#2a60f6"/><stop offset="1" stop-color="#388cf8"/></linearGradient></defs><rect width="37" height="37" rx="5" fill="url(#mg)"/><path d="M3 24 11 11.500q1.500-2 3 0l5 7-4 6q-2 2-4 0l-3-2-1 3q-3 1-4-1.500z" fill="#dfe9ff"/><path d="M12 24 20 11.500q1.500-2 3 0l3 4q1-1 2 0l6 8q-4 4-8 1l-3-4-3 4q-4 3-8-.5z" fill="#fff"/></svg></span>
  <span class="app run"><svg width="37" height="31" viewBox="0 0 37 31"><path d="M0 1q0-1 2-1h13l3 4h17q2 0 2 2v22H0z" fill="#d8a036"/><path d="M0 7h16l4-3h15q2 0 2 2v20q0 2-2 2H2q-2 0-2-2z" fill="#f8d878"/><path d="M7 30V18q0-2 3-2h18q3 0 3 2v12h-7v-7H13v7z" fill="#5298dc"/></svg></span>
  <span class="app run focus"><svg width="36" height="36"><use href="#ppt"/></svg></span>
  <span class="app run edge"><svg width="42" height="42" viewBox="0 0 42 42"><defs><linearGradient id="e1" x2="1" y2=".5"><stop offset="0" stop-color="#35b4e4"/><stop offset=".5" stop-color="#44c8d8"/><stop offset="1" stop-color="#88e04c"/></linearGradient><linearGradient id="e2" x2="0" y2="1"><stop offset="0" stop-color="#3090dc"/><stop offset="1" stop-color="#2568c4"/></linearGradient></defs><path d="M1 19C2 7 10 0 21 0c12 0 20 9 20 18 0 7-6 10-11 10-4 0-5-2-4-4 3-5-1-10-7-10C10 12 3 15 1 19z" fill="url(#e1)"/><path d="M1 18c3-5 9-7 16-5 5 1 9 5 7 9-2-3-8-4-9 3-1 8 5 14 13 14-4 2-8 2-12 1C6 38 0 30 1 18z" fill="url(#e2)"/><path d="M16 21c-5 8 1 16 10 17 7 0 11-4 13-8-6 3-22 5-23-9z" fill="#1d4fa0"/></svg></span>
  <span class="app run"><svg width="36" height="36"><use href="#word"/></svg></span>
  <div class="tray">
    <svg width="515" height="40" viewBox="1590 1170 515 40">
      <g fill="none" stroke="#eee" stroke-width="1.600"><path d="M1595.500 1195l9.500-10 9.500 10M1633 1182l25-4v25l-25-2zM1639 1189q4-7 10-2M1650 1185v4h-4M1649 1193q-3 6-9 3M1639 1198v-4h4M1677 1190q0 9 8 9t8-9M1685 1199v4M1681 1203h8"/><path d="M1718 1201q-2-18 19-20M1722.500 1201q-1-13 14.500-15M1727 1201q-1-8 10-10M1731 1201q0-4 6-5" stroke="#bfc4cc"/><path d="M1760 1183.500h17v14h-17zM1778.500 1188v5M1754 1181v5M1759 1181v5M1752.500 1185.500h8v3q-4 4-8 0zM1756.500 1190v7h5"/><path d="M1794 1186h4l6-5v19l-6-5h-4zM1808 1187q2 3 0 7M1812 1184q4 6 0 13M1815 1181q5 9 0 19"/><path d="M2071 1178h26v21h-9l-4.500 4.500-4.500-4.500h-8z"/></g>
      <rect x="1679" y="1177" width="12" height="20" rx="2" fill="#fff"/><path d="M1763 1186h11v9h-11z" fill="#fff"/><circle cx="1735.500" cy="1200" r="2" fill="#fff"/><circle cx="1653" cy="1198" r="6.200" fill="#f09c34"/>
      <path d="M1833.500 1185h20v10h-20zM1843.500 1179v23" fill="none" stroke="#fff" stroke-width="2.600"/>
      <path d="M1879 1181l20-4q3 0 4 3l3 15q0 3-3 5l-18 3q-3 0-4-2z" fill="#e35c2e"/><text x="1883" y="1199" class="sogou small" textLength="19" lengthAdjust="spacingAndGlyphs">S</text>
    </svg>
    <div class="clock"><span>18:22</span><span>2022/12/20</span></div>
    <i class="desk"></i>
  </div>
</footer>
<div class="letterbox bottom"></div>
</body>
</html>
```
FILE: styles.css
```css
* { box-sizing: border-box; }
body { margin: 0; width: 2144px; height: 1242px; overflow: hidden; padding-right: 4px; background: #f1f1f1; font: 20px/1 "Noto Sans", "Noto Sans CJK SC", sans-serif; color: #444; display: flex; flex-direction: column; text-spacing-trim: space-all; }
svg { display: block; flex: none; overflow: visible; }
.defs { position: absolute; }
i { font-style: normal; flex: none; }
span, b { white-space: nowrap; }
.letterbox { background: #000; flex: none; }
.letterbox.top { height: 20px; }
.letterbox.bottom { height: 19px; }
.logo-letter { font: 700 20px "Open Sans", sans-serif; fill: #fff; }
.word-letter { font-size: 16px; }

.caret { display: block; width: 0; height: 0; border: 4.500px solid transparent; border-top: 5px solid #666; border-bottom: 0; }
.caret.up { border-top: 0; border-bottom: 5px solid #666; }
.caret.faint, .off .caret { border-top-color: #b5b5b5; }
.caret.up.faint, .off .caret.up { border-top-color: transparent; border-bottom-color: #b5b5b5; }

.titlebar { height: 37px; flex: none; display: flex; background: #fff; }
.quick { width: 246px; display: flex; align-items: center; padding: 0 0 1px 10px; }
.save { margin-left: 16px; }
.undo { margin-left: 19px; }
.undo-caret { margin-left: 7px; }
.redo { margin-left: 17px; }
.show { margin-left: 17px; }
.custom { margin-left: 16px; }
.caption { width: 1686px; background: #d83228; border-bottom: 1px solid #b93028; color: #fff; text-align: center; line-height: 36px; padding-right: 42px; font-size: 20.200px; word-spacing: 1px; }
.window-tools { flex: 1; display: flex; align-items: center; padding-left: 15px; }
.help { width: 13px; font-weight: 600; font-size: 25px; color: #777; }
.opts { margin-left: 24px; }
.minimise { width: 20px; height: 4px; background: #777; margin: 12px 0 0 19px; }
.restore { margin-left: 21px; }
.close { margin-left: 21px; }

.tabs { height: 40px; flex: none; display: flex; background: #fff; border-bottom: 1px solid #d4d4d4; line-height: 39px; }
.file { width: 98px; height: 40px; background: #c25030; color: #fff; text-align: center; }
.tab { padding: 0 16.300px; }
.tab.active { height: 40px; margin: 0 0 0 7px; padding: 0 15px 0 14px; width: 70px; border: 1px solid #d4d4d4; border-bottom: 0; background: #fff; color: #c8502f; line-height: 37px; }
.login { margin-left: auto; line-height: 33px; }

.ribbon { height: 149px; flex: none; display: flex; background: #fefefe; border-bottom: 1px solid #d0d0d0; position: relative; }
.group { display: grid; grid-template-rows: 116px 1fr; position: relative; border-right: 1px solid #e0e0e0; border-image: linear-gradient(transparent 5px, #dedede 5px, #dedede 144px, transparent 144px) 1; }
.g-clip { width: 176px; } .g-slides { width: 184px; } .g-font { width: 333px; } .g-para { width: 453px; } .g-draw { width: 527px; } .g-edit { width: 108px; }
.body { display: flex; }
.foot { display: flex; align-items: flex-start; padding-top: 8px; color: #666; }
.foot span { flex: 1; text-align: center; }
.foot svg { width: 12px; margin: 7px 6px 0 8px; color: #777; }
.off .foot svg, .off2 svg { color: #bbb; }
.off { color: #a2a2a2; }
.off .foot { color: #666; }
.rows { padding-top: 4.500px; }
.rows > div { height: 37px; display: flex; align-items: center; }
.rows.tight { padding-top: 3.500px; }
.rows.tight > div { height: 34.700px; }
.rows .caret { margin-top: 2px; }
.big { display: flex; flex-direction: column; align-items: center; }
.big b { font-weight: 400; line-height: 24px; }
.big > .caret { margin-top: 11px; }
.paste { width: 50px; margin-left: 15px; padding-top: 9px; }
.paste b { margin: 5px 8px 0 0; }
.paste > .caret { margin-right: 1px; align-self: flex-start; margin-left: 20px; }
.g-clip .rows { margin-left: 8px; }
.g-clip .rows span { margin-left: 6px; }
.g-clip .rows .caret { margin-left: 12px; }
.newslide { margin-left: 6px; width: 74px; padding-top: 7px; }
.newslide svg { margin-left: 2px; }
.newslide b { margin-top: 9px; }
.newslide .second { margin-top: 1px; display: flex; align-items: center; }
.newslide .second .caret { margin-left: 6px; }
.g-slides .rows { margin-left: 7px; }
.g-slides .rows span { margin-left: 3px; }
.g-slides .rows .caret { margin-left: 6px; }

.g-font .body { display: block; padding-left: 4px; }
.line { display: flex; align-items: center; }
.font-top { height: 34px; margin-top: 17px; }
.combo { width: 147px; height: 34px; border: 1px solid #dcdcdc; display: flex; align-items: center; justify-content: space-between; padding: 0 5px 0 4px; font-size: 21px; }
.combo.size { width: 65px; border-left: 0; }
.grow, .shrink { display: flex; align-items: flex-start; font-size: 27px; margin-left: 6px; font-weight: 500; color: #999; }
.shrink { font-size: 23px; margin: 3px 0 0 8px; }
.grow .caret { margin-top: 0; } .shrink .caret { margin-top: -4px; }
.vsep { width: 1px; height: 26px; background: #ddd; }
.font-top .vsep { margin: 0 13px 0 10px; }
.erase-a { font: italic 18px "Noto Sans"; fill: #aaa; }
.font-bottom { height: 36px; margin-top: 13px; }
.fb { width: 33.500px; text-align: center; font-size: 25px; color: #9b9b9b; font-weight: 700; }
.it { font-family: "Liberation Serif", serif; font-style: italic; font-size: 27px; }
.un { text-decoration: underline; text-underline-offset: 3px; text-decoration-thickness: 2px; font-weight: 500; }
.sh { text-shadow: 2px 2px 2px #ccc; }
.strike { font-size: 18px; font-weight: 400; text-decoration: line-through; }
.av { display: flex; flex-direction: column; align-items: center; width: 34px; font-size: 18px; }
.av svg { margin-top: -1px; }
.font-bottom .caret { margin-top: 4px; }
.aa { font-size: 22px; margin-left: 9px; width: 28px; } .aa + .caret { margin-left: 3px; }
.font-bottom .vsep { height: 30px; margin: 0 13px 0 10px; }
.fcolor { font-size: 26px; width: 18px; } .fcolor + .caret { margin-left: 12px; }

.ln { fill: none; stroke: #aaa; stroke-width: 1.400; }
.ln .arr { stroke: #999; stroke-width: 2.200; }
.ln .dot { fill: #a5a5a5; stroke: none; }
.ln text { stroke: none; fill: #999; font: 10px "Noto Sans"; }
.ln .dir-a { font-size: 17px; font-weight: 600; }
.para-left { width: 243px; padding: 20px 0 0 9px; }
.para-left .line { height: 26px; }
.para-left .second { margin-top: 25px; gap: 10.500px; }
.c1 { margin-left: 7px; } .nums { margin-left: 9px; } .c2 { margin-left: 7px; } .c2 + .vsep { margin-left: 8px; }
.o1 { margin-left: 10px; } .o2 { margin-left: 8px; } .s2 { margin-left: 9px; } .o3 { margin-left: 10px; } .c3 { margin-left: 5px; }
.second .vsep { margin-left: -1px; }
.second .vsep + svg + .caret { margin-left: -4px; }
.g-para .rows span { margin-left: 3px; }
.g-para .rows .caret { margin-left: 6px; }
.smart { letter-spacing: .15px; }
.para-left .line { width: 240px; }

.gallery { margin: 7px 0 0 5px; width: 228px; height: 100px; display: flex; border: 1px solid #aaa; }
.shapes { width: 203px; display: grid; grid-template-columns: repeat(6, 33.500px); grid-auto-rows: 33px; justify-items: center; align-items: center; padding-left: 0; }
.shapes svg { width: 25px; height: 25px; fill: none; stroke: #777; stroke-width: 1.400; }
.shapes .brace { stroke: #555; stroke-width: 1.800; }
.shapes text { font: 700 12px "Liberation Serif"; fill: #3c6cb4; stroke: none; }
.gscroll { flex: 1; display: grid; grid-template-rows: 1fr 1fr 1fr; border-left: 1px solid #aaa; }
.gscroll span { display: flex; align-items: center; justify-content: center; }
.gscroll span + span { border-top: 1px solid #aaa; }
.more .caret { position: relative; }
.more .caret::before { content: ""; position: absolute; left: -4.500px; top: -9px; width: 9px; height: 1.500px; background: #666; }
.arrange { width: 50px; margin-left: 10px; padding-top: 9px; }
.arrange b { margin-top: 8px; }
.quickstyle { width: 84px; margin-left: 8px; padding-top: 11px; }
.quickstyle b { margin-top: 3px; }
.quickstyle > .caret { margin-left: 4px; }
.arrange > .caret { margin-left: 3px; }
.g-draw .rows { margin-left: 4px; }
.g-draw .rows svg { width: 27px; }
.g-draw .rows span { margin-left: 3px; } .g-draw .rows .caret { margin-left: 5px; }
.g-edit .rows { margin-left: 9px; }
.g-edit .rows svg { width: 25px; } .g-edit .rows span { margin-left: 4px; } .g-edit .rows .caret { margin-left: 5px; } .g-edit .rows .replace-caret { margin-left: 11px; }
.rep { font: 600 14px "Noto Sans"; fill: #555; }
.collapse { margin: 129px 0 0 330px; }

.work { height: 874px; flex: none; display: flex; position: relative; background: linear-gradient(#fdfdfd, #f6f6f6 35%, #f1f1f1 65%, #efefef); overflow: hidden; }
.thumbs { width: 304px; padding: 28px 0 0 7px; display: flex; flex-direction: column; gap: 33px; }
.thumb-row { display: flex; height: 170px; flex: none; }
.thumb-row > span { width: 40px; font-size: 26px; line-height: 14px; color: #555; }
.current > span { color: #c8502f; }
.thumb { background: #fff; outline: 1px solid #c4c4c4; outline-offset: -1px; overflow: hidden; }
.current .thumb { outline: 3px solid #e07a5c; outline-offset: -1px; }
.tt { font: 9.500px "Liberation Sans", "Noto Sans CJK SC", sans-serif; fill: #000; }
.tt.dense { font-size: 9px; }
.tt.last { font-size: 10.500px; }
.cell { font: 8px "Liberation Sans", sans-serif; fill: #333; }
.tiny { font: 5px "Liberation Sans", "Noto Sans CJK SC", sans-serif; fill: #666; }
.mini-title { font: 46px "Liberation Sans", "Noto Sans CJK SC", sans-serif; fill: #111; }
.scrollbar { width: 28px; display: flex; flex-direction: column; position: relative; margin-top: 2px; background: #e8e8e8; }
.btn { height: 27px; flex: none; background: #fff; border: 1px solid #c0c0c0; display: flex; align-items: center; justify-content: center; }
.btn .caret { border-width: 6px; border-top-width: 6px; border-bottom-width: 0; }
.btn .caret.up { border-bottom-width: 6px; border-top-width: 0; }
.handle { background: #fff; border: 1px solid #b4b4b4; flex: none; }
.h1 { height: 139px; margin-top: 325px; }
.left .end { margin-top: 352px; }
.left { height: 871px; }
.h2 { height: 27px; margin-top: 349px; }
.right .end { margin-top: 295px; height: 28px; }
.right { height: 726px; }
.pager { margin: 8px auto 0; flex: none; }
.editor { flex: 1; margin-left: 5px; border-left: 1px solid #d4d4d4; display: flex; flex-direction: column; }
.stage { height: 820px; padding: 10px 0 0 357px; border-bottom: 1px solid #d8d8d8; }
.slide { background: #fff; outline: 1px solid #d4d4d4; outline-offset: -1px; box-shadow: 0 1px 0 #d0d0d0; }
.notes { font-size: 24.600px; padding: 13px 0 0 18px; color: #5c5c5c; }
.title { font: 300 47px "Liberation Sans", "Noto Sans CJK SC", sans-serif; fill: #000; }
.arrow { fill: #c0dde1; stroke: #333; }
.arrow .dark { fill: #9ab0b4; }
.slide { stroke-width: 1.300; }
.current .thumb { stroke-width: 6; }
.title, .mini-title { stroke: none; }
.edges { fill: none; stroke: #444; }
.nodes { fill: #fff; stroke: #333; }
.labels { font: 25px "Liberation Sans", sans-serif; fill: #111; stroke: none; text-anchor: middle; }
.ime { position: absolute; left: 1842px; top: 771px; }
.sogou { font: italic 900 46px "Lato", "Liberation Sans", sans-serif; fill: #fff; }
.sogou.small { font-size: 24px; }
.blue-line { fill: none; stroke: #2f6ed4; stroke-width: 3; }
.blue-fill { fill: #2f6ed4; }

.status { height: 37px; flex: none; background: #c25030; color: #fff; display: flex; align-items: center; padding-left: 9px; }
.s-page { width: 259px; word-spacing: 1.200px; } .s-lang { margin-left: 18px; width: 1124px; }
.s-t1 { margin-left: 7px; width: 64px; } .s-t2 { margin-left: 5px; width: 64px; }
.view { width: 50.500px; height: 37px; display: flex; align-items: center; justify-content: center; }
.view.on { background: #a64227; }
.zoomer { margin-left: 6px; }
.pct { margin-left: 17px; width: 62px; font-size: 20.500px; }

.taskbar { height: 66px; flex: none; display: flex; background: linear-gradient(90deg, #28383f, #263540 50%, #20304a 68%, #1f2640); }
.app { width: 81px; margin-right: 12.600px; display: flex; align-items: center; justify-content: center; border-bottom: 3px solid transparent; background-clip: padding-box; }
.app.start { margin: 0 5px 0 0; width: 80px; padding-top: 4px; }
.run { width: 68px; margin: 0 8px; border-bottom-color: #80b4ea; padding-top: 2px; }
.meeting { margin-left: 7px; }
.focus { width: 81px; margin: 0 1px; background: #526067; background-clip: border-box; }
.tray { margin-left: auto; display: flex; align-items: center; position: relative; }
.clock { position: absolute; left: 337px; top: 1px; width: 118px; display: flex; flex-direction: column; align-items: center; line-height: 31px; color: #f2f2f2; font-size: 21.200px; }
.desk { width: 1px; height: 66px; background: #7a8090; margin: 0 7px 0 27px; }
```
